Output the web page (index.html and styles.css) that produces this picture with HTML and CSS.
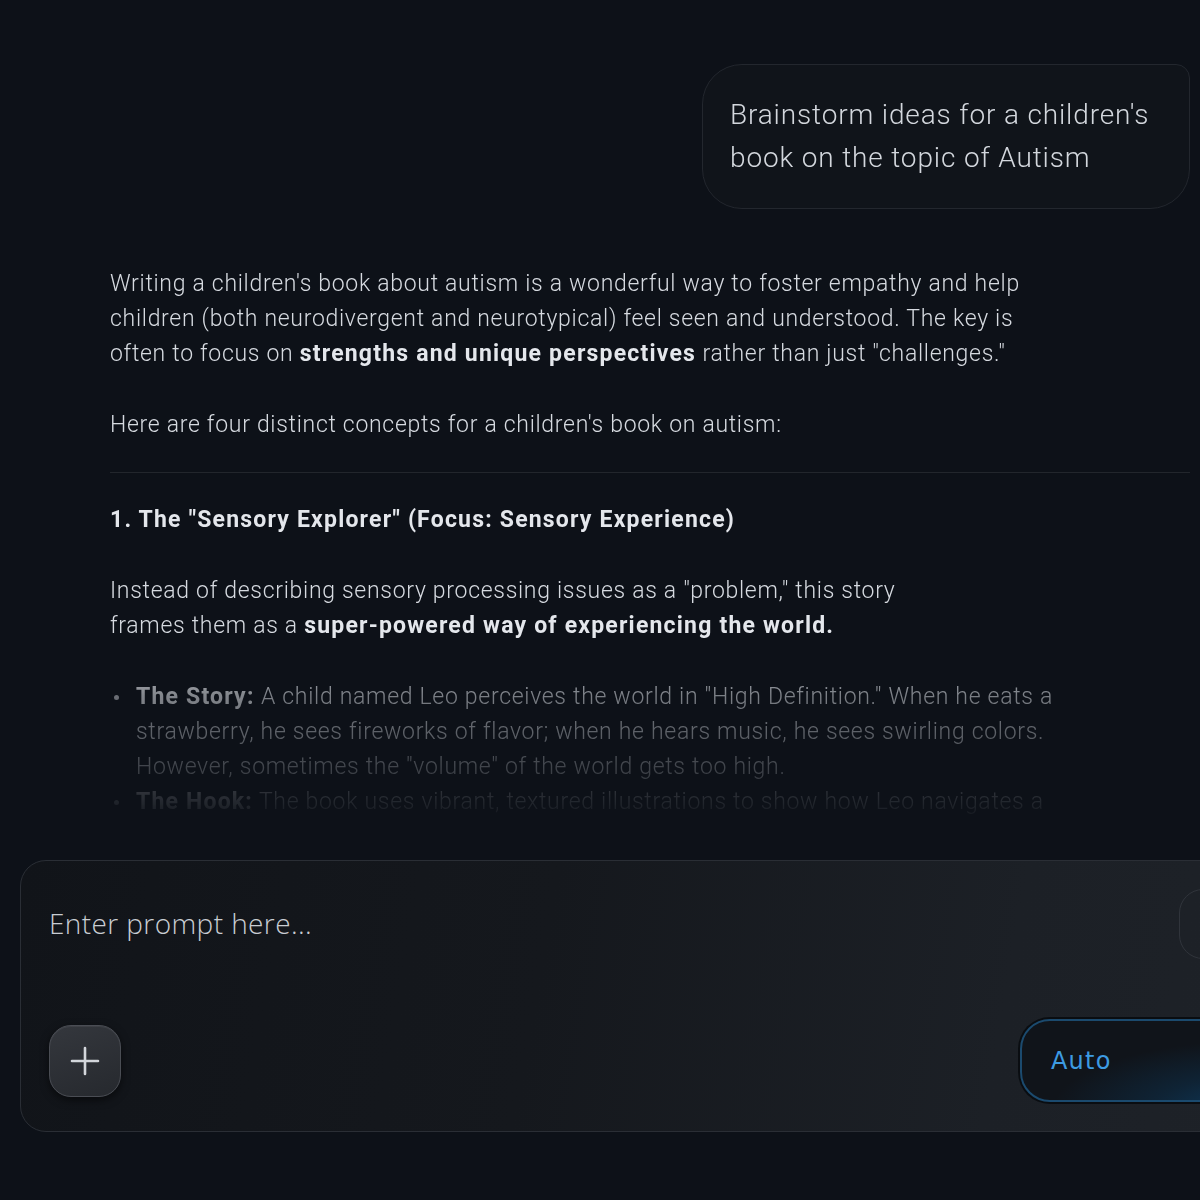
FILE: index.html
```html
<!DOCTYPE html>
<html lang="en">
<head>
    <meta charset="UTF-8">
    <meta name="viewport" content="width=device-width, initial-scale=1.0">
    <title>Chat</title>
    <link rel="stylesheet" href="styles.css">
</head>
<body>
    <main class="chat">
        <div class="user-row">
            <div class="user-bubble">Brainstorm ideas for a children's<br>book on the topic of Autism</div>
        </div>

        <section class="reply">
            <p>Writing a children's book about autism is a wonderful way to foster empathy and help<br>children (both neurodivergent and neurotypical) feel seen and understood. The key is<br>often to focus on <strong>strengths and unique perspectives</strong> rather than just "challenges."</p>
            <p>Here are four distinct concepts for a children's book on autism:</p>
            <hr>
            <h3>1. The "Sensory Explorer" (Focus: Sensory Experience)</h3>
            <p>Instead of describing sensory processing issues as a "problem," this story<br>frames them as a <strong>super-powered way of experiencing the world.</strong></p>
            <ul>
                <li><strong>The Story:</strong> A child named Leo perceives the world in "High Definition." When he eats a<br>strawberry, he sees fireworks of flavor; when he hears music, he sees swirling colors.<br>However, sometimes the "volume" of the world gets too high.</li>
                <li><strong>The Hook:</strong> The book uses vibrant, textured illustrations to show how Leo navigates a</li>
            </ul>
        </section>
    </main>

    <footer class="composer">
        <div class="composer-top">
            <div class="placeholder">Enter prompt here...</div>
            <div class="side-btn"></div>
        </div>
        <div class="composer-bottom">
            <button class="plus-btn" aria-label="Add">
                <svg width="32" height="32" viewBox="0 0 32 32">
                    <path d="M16 3v26M3 16h26" stroke="#d3d6db" stroke-width="2.6" stroke-linecap="round" fill="none"/>
                </svg>
            </button>
            <button class="auto-btn">Auto</button>
        </div>
    </footer>
</body>
</html>
```

FILE: styles.css
```css
body {
    margin: 0;
    padding: 0;
    width: 1200px;
    height: 1200px;
    overflow: hidden;
    background-color: #0d1118;
    font-family: Roboto, "Noto Sans", sans-serif;
    font-weight: 300;
}

.chat {
    height: 818px;
    overflow: hidden;
    padding: 64px 10px 0 110px;
    box-sizing: border-box;
    -webkit-mask-image: linear-gradient(to bottom, #000 645px, rgba(0,0,0,0.55) 695px, rgba(0,0,0,0.14) 795px, transparent 825px);
    mask-image: linear-gradient(to bottom, #000 645px, rgba(0,0,0,0.55) 695px, rgba(0,0,0,0.14) 795px, transparent 825px);
}

.user-row {
    display: flex;
    justify-content: flex-end;
}

.user-bubble {
    width: 488px;
    box-sizing: border-box;
    padding: 28px 10px 29px 27px;
    background-color: #10141a;
    border: 1px solid #23272e;
    border-radius: 40px 14px 40px 40px;
    color: #d3d7dd;
    font-size: 28px;
    line-height: 43px;
    letter-spacing: 0.85px;
    white-space: nowrap;
}

.reply {
    margin-top: 57px;
    color: #d6dae0;
    font-size: 23px;
    line-height: 35px;
    letter-spacing: 0.7px;
}

.reply p {
    margin: 0 0 36px;
    white-space: nowrap;
}

.reply strong {
    font-weight: 700;
    color: #e4e7ec;
    letter-spacing: 1.2px;
}

.reply hr {
    border: none;
    border-top: 1px solid #22262c;
    margin: -6px 0 29px;
}

.reply h3 {
    margin: 0 0 36px;
    font-size: 23px;
    font-weight: 700;
    line-height: 35px;
    letter-spacing: 1.2px;
    color: #e4e7ec;
}

.reply ul {
    list-style: none;
    margin: 0;
    padding: 0 0 0 26px;
}

.reply li {
    position: relative;
    white-space: nowrap;
}

.reply li::before {
    content: "";
    position: absolute;
    left: -22px;
    top: 16px;
    width: 5px;
    height: 5px;
    border-radius: 50%;
    background-color: #b8bcc2;
}

.composer {
    margin: 42px 0 0 20px;
    width: 1300px;
    height: 272px;
    box-sizing: border-box;
    padding: 34px 28px 29px 28px;
    border: 1px solid #2a2e35;
    border-radius: 26px;
    background: linear-gradient(100deg, #111419 0%, #15181d 40%, #1c2026 75%, #1e2228 100%);
    display: flex;
    flex-direction: column;
    justify-content: space-between;
}

.composer-top {
    display: flex;
    justify-content: space-between;
    align-items: flex-start;
}

.placeholder {
    margin-top: 8px;
    font-family: "Open Sans", "Noto Sans", sans-serif;
    font-weight: 300;
    font-size: 28px;
    line-height: 40px;
    letter-spacing: 0.4px;
    color: #c9cdd3;
}

.side-btn {
    width: 70px;
    height: 70px;
    margin: -6px 42px 0 0;
    box-sizing: border-box;
    border: 1px solid #30343b;
    border-radius: 24px;
}

.composer-bottom {
    display: flex;
    justify-content: space-between;
    align-items: center;
}

.plus-btn {
    width: 72px;
    height: 72px;
    border-radius: 22px;
    border: 1px solid #4a4d54;
    background: linear-gradient(160deg, #34373d 0%, #26292e 100%);
    box-shadow: 0 3px 8px rgba(0, 0, 0, 0.55), inset 0 1px 0 rgba(255, 255, 255, 0.06);
    display: flex;
    align-items: center;
    justify-content: center;
    padding: 0;
    cursor: pointer;
}

.auto-btn {
    width: 271px;
    height: 83px;
    box-sizing: border-box;
    border: 2px solid #1b4a6e;
    border-radius: 30px;
    background: radial-gradient(ellipse 200px 70px at 230px 90px, #0d3a5d 0%, rgba(13, 58, 93, 0.4) 50%, transparent 100%), #10141a;
    box-shadow: 0 0 0 2px #0a0d11;
    color: #3d9be2;
    font-family: "DejaVu Sans", sans-serif;
    font-size: 24px;
    letter-spacing: 1.2px;
    text-align: left;
    padding: 0 0 0 29px;
    cursor: pointer;
}
```
